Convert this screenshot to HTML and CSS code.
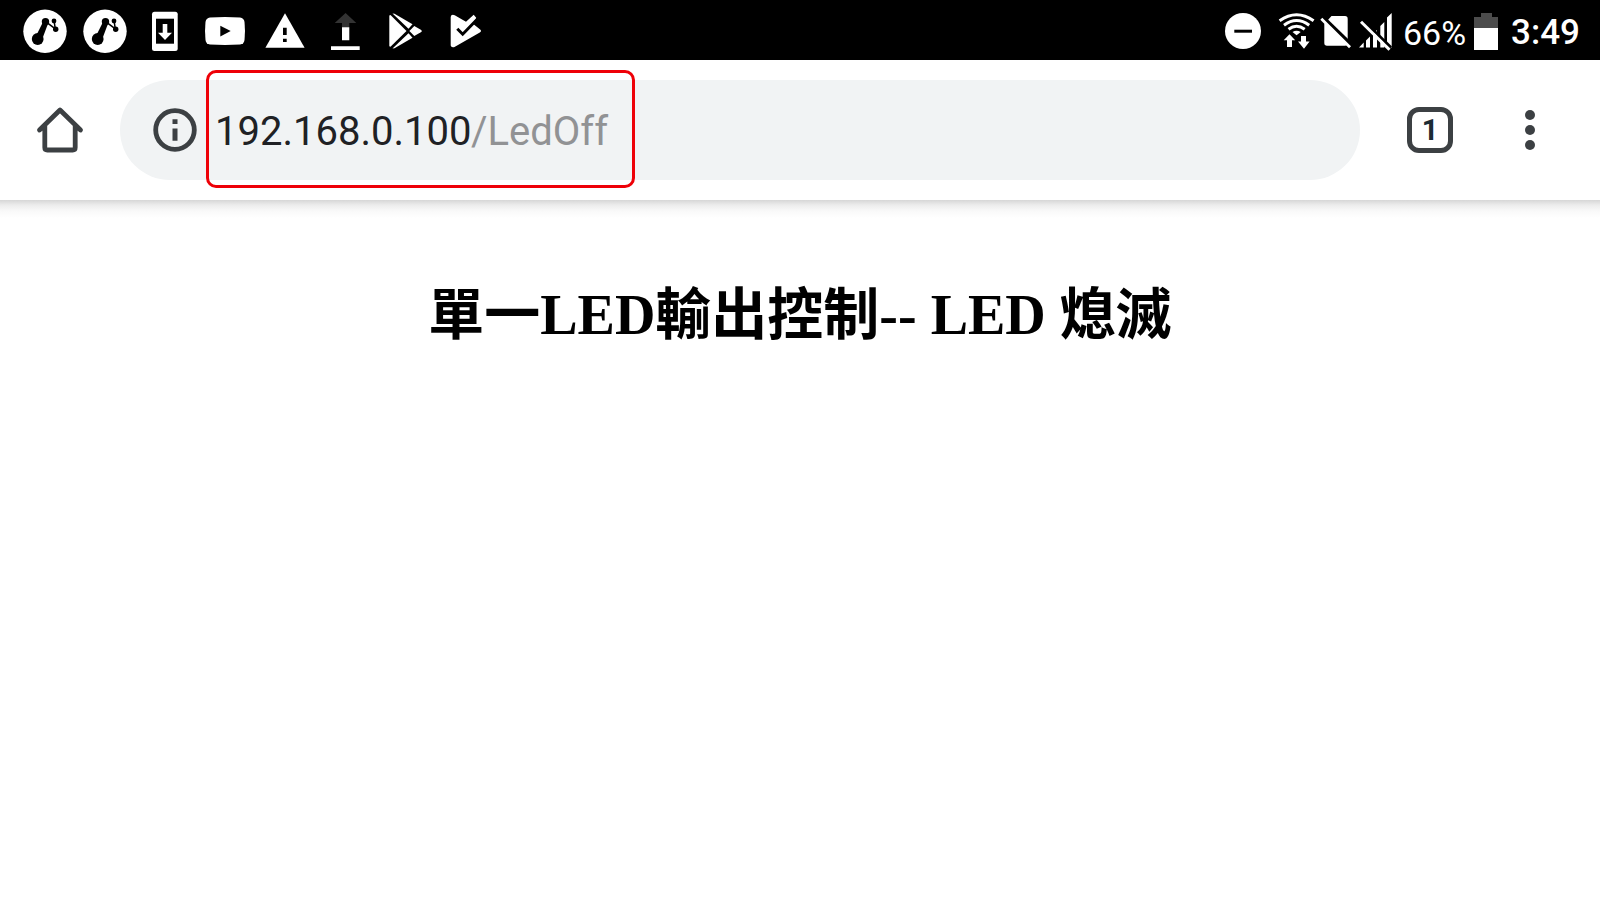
FILE: index.html
```html
<!DOCTYPE html>
<html lang="zh-Hant">
<head>
<meta charset="utf-8">
<meta name="viewport" content="width=device-width, initial-scale=1">
<title>LED</title>
<link rel="stylesheet" href="styles.css">
</head>
<body>
<header class="status-bar">
  <div class="notifications">
    <svg class="notice" viewBox="0 0 60 60" aria-hidden="true"><circle cx="30" cy="31.3" r="21.7" fill="#fff"/><g fill="#000"><circle cx="22.7" cy="39" r="5.900"/><circle cx="30.5" cy="21.700" r="3.700"/><circle cx="39" cy="21" r="2.400"/><circle cx="40.7" cy="29.3" r="2.700"/><path d="M27.500 23L22 34l6 3 4.500-12z"/></g><path d="M32 22.700l8 6M39.200 21l1 8" stroke="#000" stroke-width="1.500"/></svg>
    <svg class="notice" viewBox="0 0 60 60" aria-hidden="true"><circle cx="30" cy="31.3" r="21.7" fill="#fff"/><g fill="#000"><circle cx="22.7" cy="39" r="5.900"/><circle cx="30.5" cy="21.700" r="3.700"/><circle cx="39" cy="21" r="2.400"/><circle cx="40.7" cy="29.3" r="2.700"/><path d="M27.500 23L22 34l6 3 4.500-12z"/></g><path d="M32 22.700l8 6M39.200 21l1 8" stroke="#000" stroke-width="1.500"/></svg>
    <svg class="notice" viewBox="0 0 60 60" aria-hidden="true"><rect x="17" y="11.700" width="25.700" height="39.300" rx="2.500" fill="#fff"/><path d="M21 18.700h18v25H21z" fill="#000"/><path d="M27.700 24h4.600v8.700H37L30 40l-7-7.300h4.700z" fill="#fff"/></svg>
    <svg class="notice" viewBox="0 0 60 60" aria-hidden="true"><path d="M15 17.500q15-1 30 0 4 .5 4.500 4.500 1 9 0 18-.5 4-4.500 4.500-15 .8-30 0-4-.5-4.500-4.500-1-9 0-18 .5-4 4.500-4.500z" fill="#fff"/><path d="M25.300 25.700L35.700 31l-10.400 5.500z" fill="#000"/></svg>
    <svg class="notice" viewBox="0 0 60 60" aria-hidden="true"><path d="M30 13.300l19.600 34.400H10.400z" fill="#fff"/><path d="M28 27.700h3.700V35H28zM28 38.700h3.700V42H28z" fill="#000"/></svg>
    <svg class="notice" viewBox="0 0 60 60" aria-hidden="true"><path d="M30.600 13L41.300 23h-7v4.500H27V23h-7.300z" fill="#333"/><path d="M27 27.300h7.300v13H27zM16 46.300h28.700V50H16z" fill="#fff"/></svg>
    <svg class="notice" viewBox="0 0 60 60" aria-hidden="true"><g fill="#fff"><path d="M14.300 15.500L15.500 15 31.500 31 15.500 46.800l-1.200-.5z"/><path d="M17.500 13.500l2 .2 18 10.600-4 4.400z"/><path d="M17.500 48.500l2-.2 18-10.600-4-4.400z"/><path d="M39.300 26l6.500 3.700q2 1.300 0 2.600l-6.500 3.700-4.900-5z"/></g></svg>
    <svg class="notice" viewBox="0 0 60 60" aria-hidden="true"><path d="M15.700 17q.3-3 4-1.800L31 21.800l7.700-7 2.500 3-3.200 6 6.800 5.500q2.400 1.700 0 3.200L19.500 47q-3.300 1-3.800-1.500z" fill="#fff"/><path d="M22.300 28.700l5.400 5.500L41.500 20" fill="none" stroke="#000" stroke-width="3"/></svg>
  </div>
  <div class="system">
    <svg class="dnd" viewBox="15 0 36 60" aria-hidden="true"><circle cx="33" cy="31" r="18" fill="#fff"/><path d="M24.300 29.700H42v3H24.300z" fill="#000"/></svg>
    <svg class="wifi" viewBox="68 0 38 60" aria-hidden="true"><g fill="none" stroke="#fff" stroke-width="3"><path d="M69.600 20.700q17-12 34 0"/><path d="M74 25.300q12.600-9.500 25.200 0"/><path d="M78.500 29.300q8-6 16.200 0"/></g><path d="M82.500 32q4.100-2.400 8.200 0l-4.100 3.200z" fill="#fff"/><path d="M79.500 34.300l5.700 6H82V47h-5v-6.700h-3.300zM91 36h5v5.500h3.600L94 48.700l-6-7.200h3z" fill="#fff"/></svg>
    <svg class="sim" viewBox="110 0 32 60" aria-hidden="true"><path d="M121.500 16H135q2.700 0 2.700 2.700V43q0 2.700-2.700 2.700h-18q-2.700 0-2.700-2.700V24z" fill="#fff"/><path d="M113 17.500l28 27" stroke="#000" stroke-width="4"/><path d="M111.300 18.700l28.700 28.500" stroke="#fff" stroke-width="2.800"/></svg>
    <svg class="signal" viewBox="149 0 34 60" aria-hidden="true"><path d="M149 47.500l4.700-5v5zM156 40.500l4-4v11h-4zM163 34l4-4v17.500h-4zM170.300 26l4-4v25.500h-4zM177 17.500l4.700-4.500v34.500H177z" fill="#fff"/><path d="M152.500 19.500l28.500 28" stroke="#000" stroke-width="3"/><path d="M151 21.700l28.500 28" stroke="#fff" stroke-width="3"/></svg>
    <span class="charge">66%</span>
    <svg class="battery" viewBox="74 0 24 60" aria-hidden="true"><path d="M81 13h11v4h6v11H74V17h7z" fill="#4c4c4c"/><path d="M74 28h24v22H74z" fill="#fff"/></svg>
    <time class="clock" datetime="03:49">3:49</time>
  </div>
</header>
<nav class="toolbar" aria-label="Browser">
  <button class="home" type="button" aria-label="Home"><svg width="48" height="48" viewBox="0 0 48 48" aria-hidden="true"><path d="M3.500 24L24 4l20.500 20M8.800 20v21.500q0 2.500 2.500 2.500h25.400q2.500 0 2.500-2.500V20" fill="none" stroke="#3c4043" stroke-width="4.800" stroke-linejoin="round" stroke-linecap="round"/></svg></button>
  <form class="omnibox">
    <button class="info" type="button" aria-label="Site information"><svg width="44" height="44" viewBox="0 0 44 44" aria-hidden="true"><circle cx="22" cy="22" r="19.300" fill="none" stroke="#3c4043" stroke-width="4.800"/><path d="M19.500 11.300h5V16h-5zM19.500 20.500h5v12.300h-5z" fill="#3c4043"/></svg></button>
    <div class="address">
      <input class="host" type="text" aria-label="Host" value="192.168.0.100">
      <input class="path" type="text" aria-label="Path" value="/LedOff">
    </div>
  </form>
  <button class="tabs" type="button" aria-label="Open tabs"><span class="tab-count">1</span></button>
  <button class="menu" type="button" aria-label="Menu"><svg width="12" height="40" viewBox="0 0 12 40" aria-hidden="true"><g fill="#3c4043"><circle cx="6" cy="5" r="5"/><circle cx="6" cy="20" r="5"/><circle cx="6" cy="35" r="5"/></g></svg></button>
</nav>
<main class="page">
  <h1 class="title">單一LED輸出控制-- LED 熄滅</h1>
</main>
</body>
</html>
```
FILE: styles.css
```css
* {
  box-sizing: border-box;
}

body {
  margin: 0;
  background: #fff;
  font-family: Roboto, "Liberation Sans", sans-serif;
}

button,
input {
  margin: 0;
  padding: 0;
  border: 0;
  background: none;
  font: inherit;
}

svg {
  display: block;
  flex: none;
}

.status-bar {
  display: flex;
  justify-content: space-between;
  height: 60px;
  padding: 0 20px 0 15px;
  background: #000;
  color: #fff;
}

.notifications,
.system {
  display: flex;
  align-items: center;
}

.notice {
  width: 60px;
  height: 60px;
}

.system svg {
  height: 60px;
}

.dnd {
  width: 36px;
  margin-right: 17px;
}

.wifi {
  width: 38px;
  margin-right: 4px;
}

.sim {
  width: 32px;
  margin-right: 7px;
}

.signal {
  width: 34px;
  margin-right: 10px;
}

.charge,
.clock {
  padding-top: 5px;
  font-size: 34px;
  line-height: 40px;
}

.battery {
  width: 24px;
  margin: 0 13px 0 8px;
}

.clock {
  padding-top: 6px;
  font-size: 35px;
  font-weight: 500;
}

.toolbar {
  display: flex;
  align-items: center;
  height: 140px;
  padding-right: 20px;
  background: #fff;
}

.home {
  display: grid;
  place-items: center;
  width: 120px;
  height: 100px;
}

.omnibox {
  display: flex;
  flex: 1;
  align-items: center;
  gap: 9px;
  height: 100px;
  margin-right: 20px;
  padding-left: 33px;
  border-radius: 50px;
  background: #f1f3f4;
}

.address {
  display: flex;
  align-items: center;
  flex: none;
  width: 429px;
  height: 118px;
  margin-bottom: 2px;
  padding: 4px 0 0 6px;
  border: 3px solid #ee0007;
  border-radius: 10px;
  font-size: 40px;
}

.host {
  width: 256px;
  height: 60px;
  color: #202124;
}

.path {
  flex: 1;
  min-width: 0;
  height: 60px;
  color: #919294;
}

.tabs,
.menu {
  display: grid;
  place-items: center;
  width: 100px;
  height: 100px;
}

.tab-count {
  display: grid;
  place-items: center;
  width: 46px;
  height: 46px;
  border: 5px solid #3c4043;
  border-radius: 12px;
  color: #1c2b33;
  font-size: 29px;
  font-weight: 700;
  line-height: 32px;
}

.page {
  padding: 75px 16px;
  background: linear-gradient(#d6d6d6, #ececec 5px, #f9f9f9 11px, #fff 18px);
}

.title {
  margin: 0;
  color: #000;
  font-family: "Liberation Serif", "Noto Sans CJK TC", serif;
  font-size: 56px;
  font-weight: 700;
  line-height: 80px;
  text-align: center;
}
```
